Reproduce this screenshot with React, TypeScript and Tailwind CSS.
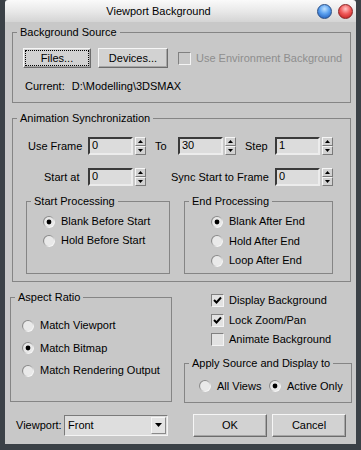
import React, { useId } from "react";

function cleanId(s: string) {
  return "g" + s.replace(/[^a-zA-Z0-9]/g, "");
}

function Radio({ checked }: { checked?: boolean }) {
  const id = cleanId(useId());
  return (
    <svg width="12" height="12" viewBox="0 0 12 12" className="shrink-0">
      <defs>
        <linearGradient id={id} x1="0" y1="0" x2="1" y2="1">
          <stop offset="0.3" stopColor="#8a8a8a" />
          <stop offset="0.75" stopColor="#f6f6f6" />
        </linearGradient>
      </defs>
      <circle cx="6" cy="6" r="6" fill={`url(#${id})`} />
      <circle cx="6" cy="6" r="4.9" fill="#e9e9e9" />
      {checked && <circle cx="6" cy="6" r="2.4" fill="#000" />}
    </svg>
  );
}

function RadioRow({ label, checked }: { label: string; checked?: boolean }) {
  return (
    <div className="flex items-center h-[13px] gap-[6px]">
      <Radio checked={checked} />
      <span className="whitespace-nowrap">{label}</span>
    </div>
  );
}

function Check({ checked, disabled }: { checked?: boolean; disabled?: boolean }) {
  return (
    <div
      className={`w-[13px] h-[13px] shrink-0 border border-t-[#808080] border-l-[#808080] border-b-[#f4f4f4] border-r-[#f4f4f4] flex items-center justify-center ${
        disabled ? "bg-[#c8c8c8]" : "bg-[#e2e2e2]"
      }`}
    >
      {checked && (
        <svg width="9" height="9" viewBox="0 0 9 9">
          <path d="M1 4 L3.5 6.5 L8 1.5" stroke="#000" strokeWidth="2" fill="none" />
        </svg>
      )}
    </div>
  );
}

function CheckRow({ label, checked }: { label: string; checked?: boolean }) {
  return (
    <div className="flex items-center h-[19.5px] gap-[5px]">
      <Check checked={checked} />
      <span className="whitespace-nowrap">{label}</span>
    </div>
  );
}

function Btn({ label, className, focus }: { label: string; className?: string; focus?: boolean }) {
  return (
    <div
      className={`relative flex items-center justify-center bg-[#d2d2d2] border border-t-[#f6f6f6] border-l-[#f6f6f6] border-b-[#6c6c6c] border-r-[#6c6c6c] shadow-[inset_-1px_-1px_0_#a6a6a6] ${className ?? ""}`}
    >
      {focus && <div className="absolute inset-[1px] border border-dotted border-black" />}
      <span className="whitespace-nowrap">{label}</span>
    </div>
  );
}

function Spinner() {
  const half =
    "flex-1 flex items-center justify-center bg-[#d2d2d2] border border-t-[#f6f6f6] border-l-[#f6f6f6] border-b-[#7a7a7a] border-r-[#7a7a7a]";
  return (
    <div className="w-[11px] h-[18px] ml-[2px] flex flex-col">
      <div className={half}>
        <svg width="5" height="3" viewBox="0 0 5 3">
          <path d="M0 3 L2.5 0 L5 3 Z" fill="#000" />
        </svg>
      </div>
      <div className={half}>
        <svg width="5" height="3" viewBox="0 0 5 3">
          <path d="M0 0 L2.5 3 L5 0 Z" fill="#000" />
        </svg>
      </div>
    </div>
  );
}

function SpinField({ value }: { value: string }) {
  return (
    <div className="flex items-center">
      <div className="w-[45px] h-[18px] bg-[#dcdcdc] border-2 border-t-[#3a3a3a] border-l-[#3a3a3a] border-b-[#ececec] border-r-[#ececec] pl-[2px] leading-[13px]">
        {value}
      </div>
      <Spinner />
    </div>
  );
}

function Group({
  label,
  className,
  children,
}: {
  label: string;
  className?: string;
  children?: React.ReactNode;
}) {
  return (
    <fieldset className={`border border-[#858585] ${className ?? ""}`}>
      <legend className="ml-[4px] px-[3px] leading-[13px]">{label}</legend>
      {children}
    </fieldset>
  );
}

export default function App() {
  return (
    <div className="w-[361px] h-[450px] bg-[#3b4147] flex flex-col px-[5px] pb-[6px] text-[11px] leading-[13px] text-black font-['Liberation_Sans',Arial,sans-serif]">
      {/* Title bar */}
      <div className="h-[22px] flex items-center bg-gradient-to-b from-[#fafafa] via-[#e9e9e9] to-[#d4d4d4] rounded-tl-[3px] rounded-tr-[3px]">
        <div className="flex-1 text-center text-[11px]">Viewport Background</div>
        <div className="w-[44px] flex items-center pl-[5px] gap-[6px]">
          <div className="w-[15px] h-[15px] rounded-full border border-[#2a4f86] bg-[radial-gradient(circle_at_50%_30%,#bfe2ff_0%,#5aa0ef_45%,#1650b0_100%)]" />
          <div className="w-[15px] h-[15px] rounded-full border border-[#8a2323] bg-[radial-gradient(circle_at_50%_30%,#ffc4c4_0%,#f05a5a_45%,#b81414_100%)]" />
        </div>
      </div>

      {/* Body */}
      <div className="flex-1 bg-[#c8c8c8] flex flex-col pt-[4px]">
        {/* Background Source */}
        <Group label="Background Source" className="ml-[7px] w-[339px] h-[77px]">
          <div className="pt-[9px] pl-[10px]">
            <div className="flex items-center h-[20px]">
              <Btn label="Files..." focus className="w-[68px] h-[20px]" />
              <Btn label="Devices..." className="w-[70px] h-[20px] ml-[7px]" />
              <div className="ml-[10px]">
                <Check disabled />
              </div>
              <span className="ml-[5px] text-[#8e8e8e] whitespace-nowrap">Use Environment Background</span>
            </div>
            <div className="flex items-center mt-[12px] pl-[2px] h-[13px]">
              <span>Current:</span>
              <span className="ml-[7px]">D:\Modelling\3DSMAX</span>
            </div>
          </div>
        </Group>

        {/* Animation Synchronization */}
        <Group label="Animation Synchronization" className="ml-[7px] mt-[9px] w-[339px] h-[170px]">
          <div className="pt-[12px]">
            <div className="flex items-center h-[18px] pl-[15px]">
              <div className="w-[60px]">Use Frame</div>
              <SpinField value="0" />
              <div className="ml-[9px] w-[23px]">To</div>
              <SpinField value="30" />
              <div className="ml-[9px] w-[30px]">Step</div>
              <SpinField value="1" />
            </div>
            <div className="flex items-center h-[18px] pl-[15px] mt-[13px]">
              <div className="w-[60px] pl-[16px]">Start at</div>
              <SpinField value="0" />
              <div className="w-[129px] pl-[25px] whitespace-nowrap">Sync Start to Frame</div>
              <SpinField value="0" />
            </div>
            <div className="flex mt-[9px] pl-[13px]">
              <Group label="Start Processing" className="w-[144px] h-[79px]">
                <div className="pt-[7px] pl-[16px] flex flex-col gap-[6px]">
                  <RadioRow label="Blank Before Start" checked />
                  <RadioRow label="Hold Before Start" />
                </div>
              </Group>
              <Group label="End Processing" className="ml-[14px] w-[149px] h-[79px]">
                <div className="pt-[7px] pl-[26px] flex flex-col gap-[6.5px]">
                  <RadioRow label="Blank After End" checked />
                  <RadioRow label="Hold After End" />
                  <RadioRow label="Loop After End" />
                </div>
              </Group>
            </div>
          </div>
        </Group>

        {/* Middle row */}
        <div className="flex items-start mt-[9px]">
          <Group label="Aspect Ratio" className="ml-[5px] w-[162px] h-[111px]">
            <div className="pt-[15px] pl-[11px] flex flex-col gap-[9.5px]">
              <RadioRow label="Match Viewport" />
              <RadioRow label="Match Bitmap" checked />
              <RadioRow label="Match Rendering Output" />
            </div>
          </Group>
          <div className="ml-[12px] flex flex-col">
            <div className="pl-[27px] flex flex-col">
              <CheckRow label="Display Background" checked />
              <CheckRow label="Lock Zoom/Pan" checked />
              <CheckRow label="Animate Background" />
            </div>
            <Group label="Apply Source and Display to" className="mt-[7px] w-[168px] h-[46px]">
              <div className="pt-[10px] pl-[14px] flex">
                <div className="w-[70px]">
                  <RadioRow label="All Views" />
                </div>
                <RadioRow label="Active Only" checked />
              </div>
            </Group>
          </div>
        </div>

        {/* Bottom row */}
        <div className="flex items-start mt-[11px] pl-[11px]">
          <div className="w-[48px] h-[23px] flex items-center">Viewport:</div>
          <div className="mt-[1px] w-[104px] h-[21px] flex items-center bg-[#dedede] border border-t-[#7a7a7a] border-l-[#7a7a7a] border-b-[#f4f4f4] border-r-[#f4f4f4]">
            <span className="flex-1 pl-[3px]">Front</span>
            <div className="w-[15px] h-[17px] mr-[1px] flex items-center justify-center bg-[#e4e4e4] border border-t-[#f6f6f6] border-l-[#f6f6f6] border-b-[#8a8a8a] border-r-[#8a8a8a]">
              <svg width="7" height="4" viewBox="0 0 7 4">
                <path d="M0 0 L7 0 L3.5 4 Z" fill="#000" />
              </svg>
            </div>
          </div>
          <Btn label="OK" className="ml-[25px] w-[74px] h-[23px]" />
          <Btn label="Cancel" className="ml-[5px] w-[74px] h-[23px]" />
        </div>
      </div>
    </div>
  );
}
